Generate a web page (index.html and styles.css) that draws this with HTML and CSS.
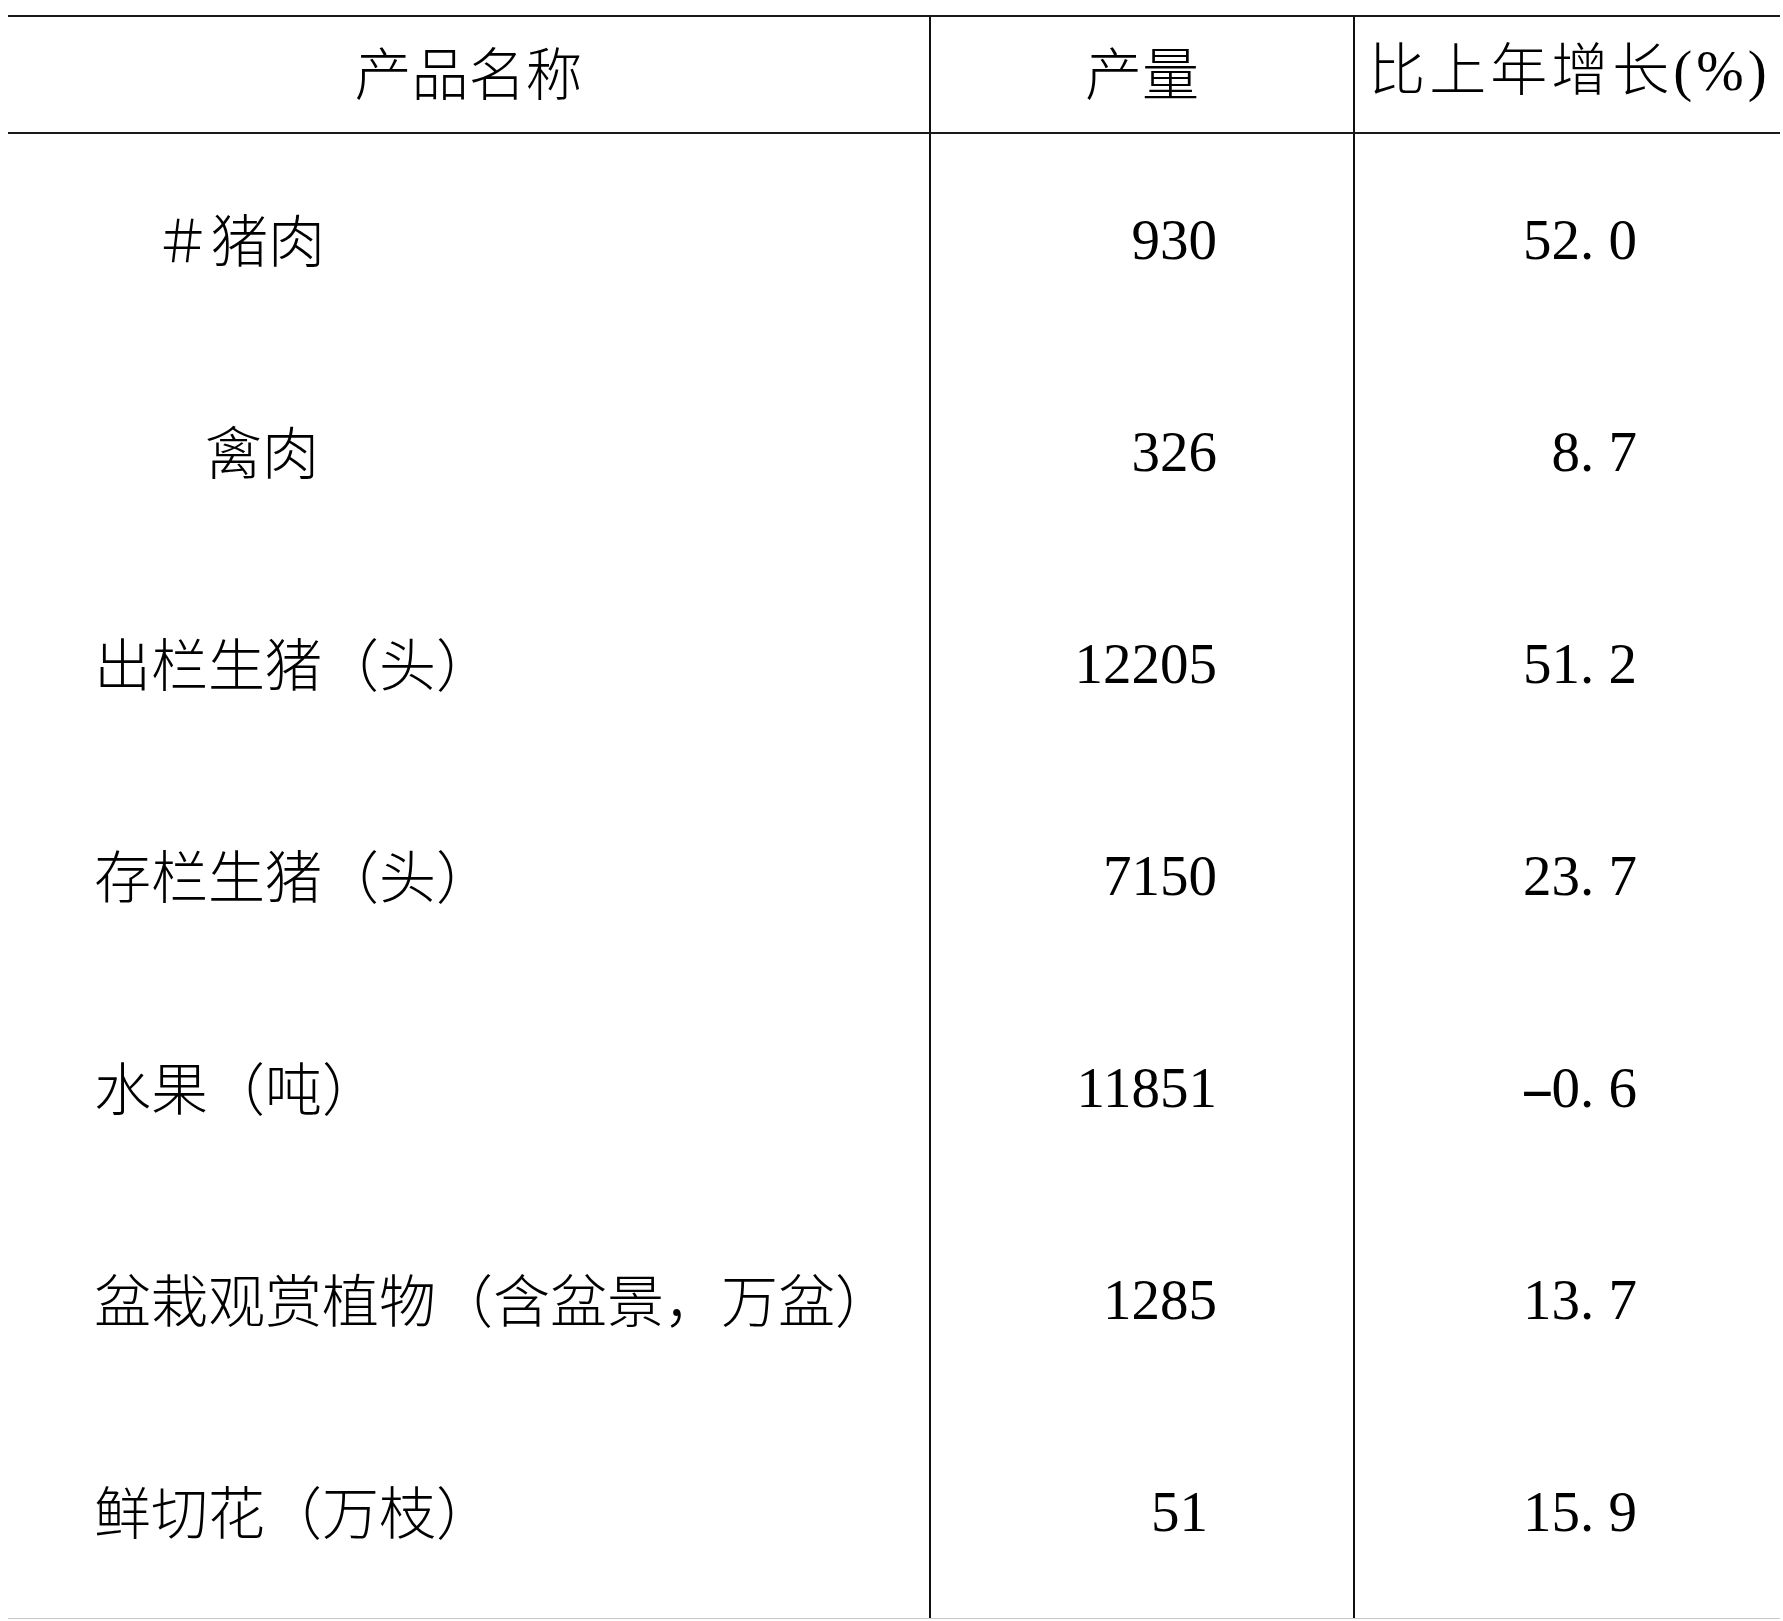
FILE: index.html
```html
<!DOCTYPE html>
<html lang="zh-CN">
<head>
<meta charset="utf-8">
<title>产品产量</title>
<link rel="stylesheet" href="styles.css">
</head>
<body>
<div class="table">
  <div class="row head">
    <div class="cell name">产品名称</div>
    <div class="cell c2">产量</div>
    <div class="cell c3">比上年增长(%)</div>
  </div>
  <div class="row">
    <div class="cell name ind1">＃猪肉</div>
    <div class="cell c2 num">930</div>
    <div class="cell c3 num">52<span class="pt">.</span>0</div>
  </div>
  <div class="row">
    <div class="cell name ind2">禽肉</div>
    <div class="cell c2 num">326</div>
    <div class="cell c3 num">8<span class="pt">.</span>7</div>
  </div>
  <div class="row">
    <div class="cell name">出栏生猪（头）</div>
    <div class="cell c2 num">12205</div>
    <div class="cell c3 num">51<span class="pt">.</span>2</div>
  </div>
  <div class="row">
    <div class="cell name">存栏生猪（头）</div>
    <div class="cell c2 num">7150</div>
    <div class="cell c3 num">23<span class="pt">.</span>7</div>
  </div>
  <div class="row">
    <div class="cell name">水果（吨）</div>
    <div class="cell c2 num">11851</div>
    <div class="cell c3 num"><span class="mn">-</span>0<span class="pt">.</span>6</div>
  </div>
  <div class="row">
    <div class="cell name">盆栽观赏植物（含盆景，万盆）</div>
    <div class="cell c2 num">1285</div>
    <div class="cell c3 num">13<span class="pt">.</span>7</div>
  </div>
  <div class="row last">
    <div class="cell name">鲜切花（万枝）</div>
    <div class="cell c2 num short">51</div>
    <div class="cell c3 num">15<span class="pt">.</span>9</div>
  </div>
</div>
</body>
</html>
```
FILE: styles.css
```css
html, body {
  margin: 0;
  padding: 0;
  background: #ffffff;
}
body {
  padding: 15px 0 0 8px;
  font-family: "Liberation Serif", "Noto Sans CJK SC", serif;
  color: #000;
}
.table {
  width: 1772px;
  border-top: 2px solid #1a1a1a;
}
.row {
  display: grid;
  grid-template-columns: 921px 424px 427px;
  height: 212px;
}
.row.head {
  height: 117px;
  border-bottom: 2px solid #1a1a1a;
  box-sizing: border-box;
}
.row.last {
  height: 213px;
  border-bottom: 1px solid #c8c8c8;
  box-sizing: border-box;
}
.cell {
  display: flex;
  align-items: center;
  box-sizing: border-box;
  font-size: 57px;
  line-height: 1;
  white-space: nowrap;
}
.c2, .c3 {
  border-left: 2px solid #111;
}
.head .cell {
  justify-content: center;
  font-size: 57px;
  padding-bottom: 8px;
}
.name {
  font-family: "Noto Sans CJK SC", sans-serif;
  font-weight: 300;
  padding-left: 86px;
  padding-bottom: 6px;
}
.head .name {
  padding-left: 0;
}
.head .c2 {
  font-family: "Noto Sans CJK SC", sans-serif;
  font-weight: 300;
}
.head .c3 {
  font-family: "Liberation Serif", "Noto Sans CJK SC", serif;
  font-weight: 300;
  letter-spacing: 4px;
  padding-left: 4px;
}
.name.ind1 {
  padding-left: 146px;
}
.name.ind2 {
  padding-left: 197px;
}
.num {
  justify-content: flex-end;
  font-family: "Liberation Serif", serif;
  font-size: 57px;
  padding-bottom: 2px;
}
.c2.num {
  padding-right: 136px;
}
.c2.num.short {
  padding-right: 145px;
}
.c3.num {
  padding-right: 143px;
}
.pt {
  margin-right: 0.25em;
}
.mn {
  display: inline-block;
  width: 0.5em;
  text-align: center;
  transform: scaleX(1.8);
}
```
